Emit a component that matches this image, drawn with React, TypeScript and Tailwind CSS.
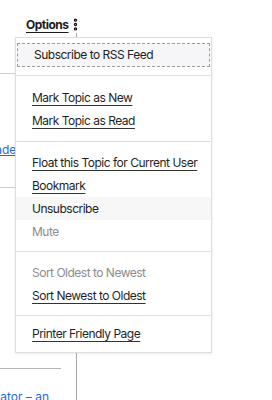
import { MoreVertical } from "lucide-react"

type Item = { label: string; state?: "link" | "muted" | "focus" | "hover" }

const sections: Item[][] = [
  [{ label: "Subscribe to RSS Feed", state: "focus" }],
  [{ label: "Mark Topic as New" }, { label: "Mark Topic as Read" }],
  [
    { label: "Float this Topic for Current User" },
    { label: "Bookmark" },
    { label: "Unsubscribe", state: "hover" },
    { label: "Mute", state: "muted" },
  ],
  [{ label: "Sort Oldest to Newest", state: "muted" }, { label: "Sort Newest to Oldest" }],
  [{ label: "Printer Friendly Page" }],
]

const sectionPad = ["pt-[5px] pb-[8px]", "pt-[10px] pb-[9px]", "pt-[9px] pb-[8px]", "pt-[9px] pb-[8px]", "pt-[6px] pb-[7px]"]

function MenuItem({ item }: { item: Item }) {
  const state = item.state ?? "link"
  let cls = "flex items-center h-[23px] px-[16px] text-[12px] tracking-[-0.5px] whitespace-nowrap"
  if (state === "focus") cls += " bg-[#f6f6f9] border border-dashed border-[#9a9a9a] mx-[1px] px-[15px] h-[24px] text-[#222]"
  if (state === "hover") cls += " bg-[#f7f7f7] text-[#222]"
  if (state === "muted") cls += " text-[#8c8c8c]"
  if (state === "link") cls += " text-[#1f1f1f] underline underline-offset-[3px] decoration-[#333]"
  return <div className={cls}>{item.label}</div>
}

export default function App() {
  return (
    <div className="relative h-[400px] w-[272px] overflow-hidden bg-white font-['Inter',sans-serif]">
      {/* page behind the menu */}
      <div className="flex items-center pl-[26px] pt-[16px] h-[33px]">
        <span className="text-[12px] tracking-[-0.5px] font-bold text-[#1a1a1a] underline underline-offset-[3px]">Options</span>
        <MoreVertical className="h-[15px] w-[15px] ml-[-1px] text-[#1a1a1a]" strokeWidth={3.5} />
      </div>
      <div className="flex">
        <div className="w-[77px] border-r border-[#a8a8a8] pt-[40px] h-[367px] text-[12px]">
          <div className="border-t border-[#cfcfcf]" />
          <div className="ml-[-33px] mt-[67px] text-[#1d6ae5] underline">Upgrade</div>
          <div className="border-t border-[#cfcfcf] mt-[28px]" />
          <div className="ml-[-65px] mt-[21px] text-[#1d6ae5] underline">Sidebar</div>
          <div className="ml-[-70px] mt-[72px] text-[#1d6ae5] underline">Mol</div>
          <div className="border-t border-[#b5b5b5] mt-[51px] w-[61px]" />
          <div className="ml-[-20px] mt-[19px] text-[#1d6ae5] whitespace-nowrap">Creator – an</div>
        </div>
      </div>

      {/* dropdown */}
      <div className="absolute left-[15px] top-[37px] w-[197px] border border-[#dedede] bg-white shadow-[0_1px_3px_rgba(0,0,0,0.08)]">
        {sections.map((items, i) => (
          <div key={i} className={`${sectionPad[i]} ${i > 0 ? "border-t border-[#dedede]" : ""}`}>
            {items.map((it) => (
              <MenuItem key={it.label} item={it} />
            ))}
          </div>
        ))}
      </div>
    </div>
  )
}
